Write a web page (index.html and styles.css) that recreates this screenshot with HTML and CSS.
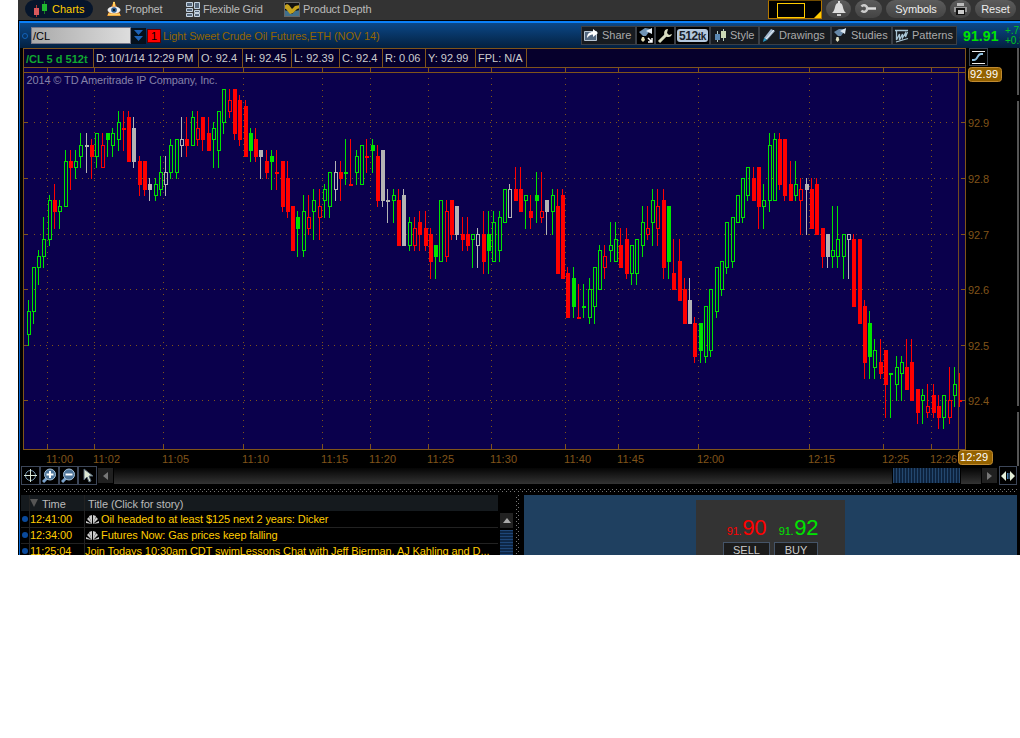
FILE: index.html
```
<!DOCTYPE html>
<html lang="en">
<head>
    <meta charset="UTF-8">
    <title>Charts</title>
    <link rel="stylesheet" href="styles.css">
</head>
<body>
    <div class="app">
        <nav class="nav">
            <div class="tab active">
                <svg width="16" height="16"><path d="M3.500 4v12M11.500 0v13" stroke="#a33" /><path d="M11.500 0v13" stroke="#157a25" /><rect x="1" y="7" width="5" height="7" fill="#d8585c"/><rect x="9" y="3" width="5" height="7" fill="#20b830"/></svg>
                <span>Charts</span>
            </div>
            <div class="tab prophet">
                <svg width="16" height="16"><path d="M8 0l7 15H1z" fill="#d97a20"/><path d="M8 1v4M2 13.500h12" stroke="#ffd060" stroke-width="2"/><ellipse cx="8" cy="9" rx="6.500" ry="3.500" fill="#eee"/><circle cx="8" cy="9" r="2.800" fill="#29598c"/><circle cx="8" cy="9" r="1" fill="#000"/></svg>
                <span>Prophet</span>
            </div>
            <div class="tab grid">
                <svg width="14" height="15"><path d="M.5.5h6v4h-6zM8.500.5h5v6h-5zM.5 6.500h6v3h-6zM8.500 8.500h5v2h-5zM.5 11.500h6v3h-6zM8.500 11.500h5v3h-5z" fill="#56687c" stroke="#c4d2e0"/></svg>
                <span>Flexible Grid</span>
            </div>
            <div class="tab depth">
                <svg width="16" height="15"><path d="M0 0h16v15H0z" fill="#111"/><path d="M0 8l4 1 4 3 3-3 5-1v7H0z" fill="#42708c"/><path d="M0 4l3-2 2 1 3 4 3-3 5-1v3l-3 1-4 4-3 1-4-5-4-1z" fill="#c6a21c"/><path d="M.5.5h15v14H.5z" fill="none" stroke="#666"/></svg>
                <span>Product Depth</span>
            </div>
            <div class="nav-right">
                <div class="monitor"><i></i><b></b></div>
                <div class="pill bell"><svg width="18" height="16"><path d="M8 0h2v2c4 1 2 7 6 10H2c4-3 2-9 6-10z" fill="#ddd"/><path d="M7 13h4v2H7z" fill="#ccc"/></svg></div>
                <div class="pill wrench"><svg width="17" height="12"><path d="M1.500 3.500a3.200 3.200 0 1 1 0 4" fill="none" stroke="#ccc" stroke-width="2.500"/><path d="M8 5.500h8" stroke="#ddd" stroke-width="2.500"/></svg></div>
                <div class="pill symbols">Symbols</div>
                <div class="pill printer"><svg width="13" height="12"><path d="M3 0h7v3H3z" fill="#bbb"/><path d="M0 4h13v5H0z" fill="#999"/><path d="M2 5h9v7H2z" fill="#111"/><path d="M4 7h6v4H4z" fill="#ccc"/></svg></div>
                <div class="pill reset">Reset</div>
            </div>
        </nav>

        <main class="frame">
            <div class="symbol-bar">
                <span class="link-dot"></span>
                <div class="symbol">/CL</div>
                <div class="drop"><svg width="15" height="16"><path d="M3 2h9L7.500 7zM3 8h9l-4.500 5z" fill="#1e62b8"/></svg></div>
                <div class="link-number">1</div>
                <span class="description">Light Sweet Crude Oil Futures,ETH (NOV 14)</span>
                <div class="tools">
                    <div class="tool share">
                        <svg width="15" height="13"><path d="M.5 2.500h12v9H.5z" fill="#536880" stroke="#b9c7d4"/><path d="M3 9c0-4 2-6 6-6V0l5 4-5 4V5.500C6 5.500 5 7 3 9z" fill="#fff"/></svg>
                        <span>Share</span>
                    </div>
                    <div class="tool dark w19"><svg width="16" height="16"><path d="M1 4l6-4 6 1-5 7H5z" fill="#6f93b4"/><path d="M8 3l6-3v6z" fill="#e5edf5"/><path d="M4 9h2l1 3-2 2-2-2z" fill="#ddd8b0"/><path d="M10 10l4 4m0-4v4h-4" stroke="#fff" stroke-width="1.500" fill="none"/></svg></div>
                    <div class="tool dark w20"><svg width="16" height="16"><path d="M2 14l7-7" stroke="#d8dcc0" stroke-width="3"/><path d="M11 1a4 4 0 1 0 4 5l-3 1-2-2z" fill="#d8dcc0"/></svg></div>
                    <div class="tool dark tick"><b>512<small>tk</small></b></div>
                    <div class="tool style">
                        <svg width="13" height="14"><path d="M3.500 2v11M9.500 0v12" stroke="#b4c8c0"/><path d="M1 5h5v6H1z" fill="#5b88b2"/><path d="M7 2h5v7H7z" fill="#cbd8b4"/></svg>
                        <span>Style</span>
                    </div>
                    <div class="tool drawings">
                        <svg width="14" height="15"><path d="M2 10L9 1l4 2-8 9z" fill="#a4b9cf"/><path d="M4 11l8-9" stroke="#edf5fc"/><path d="M1 14l1-4 3 2z" fill="#279cc8"/></svg>
                        <span>Drawings</span>
                    </div>
                    <div class="tool studies">
                        <svg width="13" height="15"><path d="M0 4l5-3 7 0-5 7H4z" fill="#6788a8"/><path d="M6 3l6-3-1 6z" fill="#dce8f2"/><path d="M2.500 9h2l.8 3-1.800 2-1.800-2z" fill="#e0dfc2"/></svg>
                        <span>Studies</span>
                    </div>
                    <div class="tool patterns">
                        <svg width="14" height="14"><path d="M0 1.500h13M1.500 2v9l3-6v6l3-6v4l3-5v4l2-5M1 13l12-3.500" fill="none" stroke="#a8c4d4" stroke-width="1.300"/></svg>
                        <span>Patterns</span>
                    </div>
                </div>
                <b class="last">91.91</b>
                <div class="change">+.79<br>+0.87%</div>
            </div>

            <div class="info">
                <div class="cells">
                    <b class="c-name">/CL 5 d 512t</b>
                    <span class="c-date">D: 10/1/14 12:29 PM</span>
                    <span class="c-o">O: 92.4</span>
                    <span class="c-h">H: 92.45</span>
                    <span class="c-l">L: 92.39</span>
                    <span class="c-c">C: 92.4</span>
                    <span class="c-r">R: 0.06</span>
                    <span class="c-y">Y: 92.99</span>
                    <span class="c-f">FPL: N/A</span>
                </div>
                <div class="scale-button"><svg width="16" height="16"><path d="M2 2.500h13M2 14.500h13" stroke="#eee"/><path d="M2 11h2c4 0 3-6 7-6h2" fill="none" stroke="#8fc0e0" stroke-width="1.800"/></svg></div>
                <div class="edge"></div>
            </div>

            <!-- x in the svg starts at the chart's left border, y at the line under the info cells -->
            <svg class="chart" id="chart" width="997" height="399" viewBox="23 67 997 399"></svg>

            <div class="scroll-row">
                <div class="icon-button"><svg width="15" height="15"><circle cx="7.500" cy="7.500" r="5" fill="none" stroke="#7a9cb4"/><path d="M7.500 1v13M1 7.500h13" stroke="#d8e8d8"/></svg></div>
                <div class="icon-button"><svg width="15" height="15"><path d="M1 14l4-4" stroke="#7ba3cc" stroke-width="3"/><circle cx="8" cy="6.500" r="5.500" fill="#4d7499" stroke="#a5c1da"/><path d="M8 3v7M4.500 6.500h7" stroke="#fff" stroke-width="2"/></svg></div>
                <div class="icon-button"><svg width="15" height="15"><path d="M1 14l4-4" stroke="#7ba3cc" stroke-width="3"/><circle cx="8" cy="6.500" r="5.500" fill="#4d7499" stroke="#a5c1da"/><path d="M4.500 6.500h7" stroke="#fff" stroke-width="2"/></svg></div>
                <div class="icon-button"><svg width="15" height="15"><path d="M4 1v11l3-3 2 5 2-1-2-5h4z" fill="#dce8d4" stroke="#567"/></svg></div>
                <div class="arrow"><svg width="5" height="8"><path d="M5 0v8L0 4z" fill="#777"/></svg></div>
                <div class="track"></div>
                <div class="thumb"></div>
                <div class="track-end"></div>
                <div class="arrow right"><svg width="5" height="8"><path d="M0 0v8l5-4z" fill="#777"/></svg></div>
                <div class="icon-button expand"><svg width="14" height="12"><path d="M0 6l5-5v10zM14 6L9 1v10z" fill="#e4eed8"/><path d="M6.500 3v6M8 3v6" stroke="#4c83b0"/></svg></div>
            </div>

            <svg class="grip" width="993" height="10">
                <defs>
                    <pattern id="dots" width="4" height="4" patternUnits="userSpaceOnUse"><path d="M0 0h1v1H0zM2 2h1v1H2z" fill="#777"/></pattern>
                </defs>
                <rect x="0" y="4" width="993" height="3" fill="url(#dots)"/>
            </svg>

            <div class="bottom">
                <div class="news">
                    <div class="news-row head"><span></span><span class="time"><svg width="8" height="8"><path d="M0 0h8L4 8z" fill="#555"/></svg>Time</span><span class="title">Title (Click for story)</span></div>
                    <div class="news-row">
                        <span class="mark"></span><span>12:41:00</span>
                        <span class="title"><svg class="peacock" width="13" height="9"><path d="M6 9L0 8V6zM6 9L1 4l2-2zM6 9L3 1l3-1zM7 9V0l3 1zM7 9l3-7 2 2zM7 9l6-3v2z" fill="#ccc"/></svg>Oil headed to at least $125 next 2 years: Dicker</span>
                    </div>
                    <div class="news-row">
                        <span class="mark"></span><span>12:34:00</span>
                        <span class="title"><svg class="peacock" width="13" height="9"><path d="M6 9L0 8V6zM6 9L1 4l2-2zM6 9L3 1l3-1zM7 9V0l3 1zM7 9l3-7 2 2zM7 9l6-3v2z" fill="#ccc"/></svg>Futures Now: Gas prices keep falling</span>
                    </div>
                    <div class="news-row">
                        <span class="mark"></span><span>11:25:04</span>
                        <span class="title join">Join Todays 10:30am CDT swimLessons Chat with Jeff Bierman, AJ Kahling and D...</span>
                    </div>
                </div>
                <div class="news-scroll">
                    <div class="up"><svg width="8" height="5"><path d="M0 5h8L4 0z" fill="#aaa"/></svg></div>
                    <div class="v-thumb"></div>
                </div>
                <svg class="v-grip" width="9" height="60"><rect x="2" width="3" height="60" fill="url(#dots)"/></svg>
                <div class="quote-panel">
                    <div class="quote">
                        <div class="side sell"><div class="price"><small>91.</small>90</div><div class="order">SELL</div></div>
                        <div class="side buy"><div class="price"><small>91.</small>92</div><div class="order">BUY</div></div>
                    </div>
                </div>
            </div>
        </main>
    </div>

    <script src="chart.js"></script>
</body>
</html>
```

FILE: styles.css
```
body {
    margin: 0;
    background: #fff;
    font-family: "Liberation Sans", Arial, sans-serif;
    font-size: 11px;
}

svg {
    display: block;
    flex: none;
}

.app {
    width: 1002px;
    height: 555px;
    margin-left: 18px;
    overflow: hidden;
    background: #000;
    color: #ccc;
}

.nav {
    display: flex;
    height: 20px;
    background: #333;
    border-bottom: 1px solid #000;
}

.tab {
    display: flex;
    align-items: center;
    gap: 3px;
    height: 18px;
    color: #bbb;
    letter-spacing: -0.15px;
}

.tab.active {
    box-sizing: border-box;
    width: 68px;
    margin-left: 7px;
    padding-left: 8px;
    border-radius: 9px;
    background: #06152b;
    color: #ffcc00;
    letter-spacing: 0;
}

.prophet {
    width: 67px;
    margin-left: 13px;
}

.grid {
    width: 98px;
    margin-left: 13px;
}

.nav-right {
    display: flex;
    height: 18px;
    margin-left: auto;
    padding-right: 4px;
}

.monitor {
    position: relative;
    box-sizing: border-box;
    width: 54px;
    height: 19px;
    margin-right: 4px;
    border: 1px solid #b47800;
    border-top-color: #704b00;
    background: #000;
}

.monitor i {
    display: block;
    width: 26px;
    height: 13px;
    margin: 2px 0 0 8px;
    border: 1px solid #ffcc00;
}

.monitor b {
    position: absolute;
    right: 0;
    bottom: 0;
    border-left: 7px solid transparent;
    border-bottom: 7px solid #ffcc00;
}

.pill {
    display: flex;
    align-items: center;
    justify-content: center;
    box-sizing: border-box;
    height: 18px;
    border-radius: 9px;
    background: linear-gradient(#5c5c5c, #444);
    color: #eee;
}

.bell {
    width: 25px;
    margin-right: 4px;
}

.wrench {
    width: 27px;
    margin-right: 4px;
}

.symbols {
    width: 60px;
    margin-right: 4px;
    letter-spacing: -0.1px;
}

.printer {
    width: 21px;
    margin-right: 4px;
}

.reset {
    width: 41px;
}

.frame {
    box-sizing: border-box;
    height: 534px;
    margin-left: 1px;
    border-top: 2px solid #0a80f8;
    border-left: 1px solid #0a6cd8;
}

.symbol-bar {
    display: flex;
    align-items: center;
    height: 25px;
    background: linear-gradient(#0b4888, #04203f);
}

.link-dot {
    box-sizing: border-box;
    width: 6px;
    height: 6px;
    margin: 0 3px 0 2px;
    border: 1px solid #1262b8;
    border-radius: 50%;
}

.symbol {
    box-sizing: border-box;
    width: 100px;
    height: 17px;
    padding-left: 1px;
    border: 1px solid #778;
    background: linear-gradient(90deg, #aaa, #ddd);
    color: #000;
    line-height: 16px;
}

.drop {
    width: 15px;
    height: 16px;
    background: #05101c;
}

.link-number {
    box-sizing: border-box;
    width: 14px;
    height: 14px;
    margin: 0 2px 0 1px;
    border: 1px solid #600;
    background: #f00;
    color: #000;
    line-height: 13px;
    text-align: center;
}

.description {
    color: #946500;
    letter-spacing: -0.13px;
}

.tools {
    display: flex;
    margin-left: auto;
}

.tool {
    display: flex;
    align-items: center;
    gap: 4px;
    box-sizing: border-box;
    height: 19px;
    padding-left: 3px;
    border: 1px solid #3a3f46;
    background: #171b20;
    color: #aaa;
}

.tool span {
    position: relative;
    top: -1px;
}

.tool.dark {
    padding-left: 1px;
    background: #000;
}

.share {
    width: 55px;
    gap: 3px;
    padding-left: 2px;
}

.w19 {
    width: 19px;
}

.w20 {
    width: 20px;
}

.tick {
    width: 35px;
}

.tick b {
    width: 31px;
    height: 13px;
    border-radius: 3px;
    background: #b4c8dc;
    color: #182028;
    font-size: 12px;
    line-height: 14px;
    letter-spacing: -0.4px;
    text-align: center;
}

.tick small {
    font-size: 10px;
}

.style {
    width: 49px;
    gap: 3px;
}

.drawings {
    width: 72px;
    gap: 3px;
    padding-left: 2px;
}

.studies {
    width: 61px;
    padding-left: 2px;
}

.patterns {
    width: 65px;
    gap: 3px;
    padding-left: 2px;
}

.last {
    width: 42px;
    margin-left: 6px;
    color: #00e400;
    font-size: 14px;
    letter-spacing: 0.1px;
}

.change {
    width: 15px;
    overflow: hidden;
    color: #00c820;
    font-size: 10px;
    line-height: 10px;
    white-space: nowrap;
}

.info {
    display: flex;
    height: 19px;
    margin-left: 3px;
}

.cells {
    display: flex;
    box-sizing: border-box;
    width: 943px;
    border: 1px solid #80541a;
    border-bottom: none;
    background: #06002c;
    color: #ccc;
    line-height: 18px;
}

.cells > * {
    box-sizing: border-box;
    padding-left: 2px;
    border-right: 1px solid #80541a;
    white-space: nowrap;
}

.c-name {
    width: 70px;
    color: #10a830;
    line-height: 20px;
}

.c-date {
    width: 105px;
    letter-spacing: -0.2px;
}

.c-o { width: 44px; }
.c-h { width: 49px; }
.c-l { width: 48px; }
.c-c, .c-r { width: 43px; }
.c-y { width: 50px; }
.c-f { width: 51px; }

.scale-button {
    box-sizing: border-box;
    width: 19px;
    height: 18px;
    margin-left: 3px;
    border: 1px solid #3c4450;
}

.edge {
    width: 2px;
    margin: 0 1px 0 auto;
    background: #555;
}

.chart {
    margin-left: 3px;
    shape-rendering: crispEdges;
}

.smooth {
    shape-rendering: auto;
}

.scroll-row {
    display: flex;
    align-items: center;
    height: 19px;
    margin-left: 1px;
}

.icon-button {
    display: flex;
    align-items: center;
    justify-content: center;
    box-sizing: border-box;
    width: 19px;
    height: 19px;
    border: 1px solid #3c4658;
}

.arrow {
    display: flex;
    align-items: center;
    justify-content: center;
    width: 15px;
    height: 15px;
    margin: 0 1px;
    background: #202020;
}

.track, .track-end {
    width: 778px;
    height: 16px;
    background: linear-gradient(#050505, #333);
}

.track-end {
    width: 20px;
}

.thumb {
    width: 67px;
    height: 15px;
    margin: 0 1px;
    background: repeating-linear-gradient(90deg, #24486f 0 1px, #0e2440 1px 3px);
}

.expand {
    width: 18px;
    margin-left: 1px;
}

.grip {
    margin-left: 4px;
}

.bottom {
    display: flex;
    height: 60px;
    margin-left: 1px;
}

.news {
    width: 477px;
}

.news-row {
    display: grid;
    grid-template-columns: 8px 55px 414px;
    height: 15px;
    border-bottom: 1px solid #222;
    color: #ffcc00;
    line-height: 15px;
    letter-spacing: -0.09px;
    white-space: nowrap;
}

.news-row.head {
    height: 16px;
    border-color: #000;
    background: #151a1e;
    color: #bbb;
    line-height: 18px;
}

.news-row > span + span {
    border-left: 1px solid #222;
}

.time {
    display: flex;
    gap: 4px;
}

.time svg {
    margin-top: 4px;
}

.title {
    display: flex;
    gap: 2px;
}

.head .title {
    padding-left: 3px;
}

.peacock {
    margin: 3px 0 0 1px;
}

.mark {
    width: 6px;
    height: 6px;
    margin: 4px 0 0 1px;
    border-radius: 50%;
    background: #0a4a9c;
}

.news-scroll {
    width: 13px;
    margin-left: 2px;
    padding-top: 18px;
}

.up {
    display: flex;
    align-items: center;
    justify-content: center;
    height: 15px;
    background: #222;
}

.v-thumb {
    height: 30px;
    margin-top: 2px;
    background: repeating-linear-gradient(#1e4678 0 1px, #0e2747 1px 3px);
}

.v-grip {
    margin: 0 1px;
}

.quote-panel {
    width: 493px;
    background: #1f4060;
}

.quote {
    display: flex;
    gap: 4px;
    box-sizing: border-box;
    width: 149px;
    height: 55px;
    margin: 5px 0 0 172px;
    padding: 14px 0 0 27px;
    background: #333;
}

.side {
    width: 47px;
}

.side.buy {
    width: 44px;
}

.price {
    display: flex;
    align-items: baseline;
    justify-content: center;
    gap: 1px;
    height: 28px;
    font-size: 22px;
    line-height: 27px;
    letter-spacing: -0.3px;
    white-space: nowrap;
}

.price small {
    font-size: 11px;
}

.sell .price {
    color: #f00;
}

.buy .price {
    color: #00e400;
    margin-left: 5px;
}

.order {
    box-sizing: border-box;
    height: 17px;
    border: 1px solid #455468;
    background: #1c1c1c;
    line-height: 14px;
    text-align: center;
}
```

FILE: chart.js
```
// one entry per bar: colour (g/r/w), h = hollow or f = filled,
// then high, body top, body bottom, low, in cents above 92.00
const bars = `
gh58,56,52,50 gh64,64,56,54 gh67,66,64,61 gh73,69,66,64 gh77,76,69,68 rf79,76,74,71
gh76,75,74,71 gh85,83,75,75 rf85,83,82,78 gh85,83,82,80 gh88,86,84,82 wf88,86,86,81
rf87,86,84,80 gh88,88,84,82 rh88,86,82,82 gf88,88,87,84 gh89,88,86,84 gh92,90,87,85
rf92,89,89,85 rf92,91,83,83 wf91,89,83,82 rf84,83,79,77 rf83,83,78,77 wf80,79,78,76
gh80,79,77,76 gh84,81,78,77 wh84,81,79,77 gh87,86,81,80 gh87,87,81,80 wh91,87,86,84
rf91,87,86,84 gh92,91,86,86 rh92,89,87,86 rf91,91,87,85 rf91,88,85,85 gh90,89,87,82
gh92,92,85,82 gh96,96,90,88 rh96,94,92,91 rf96,96,88,87 rf95,94,87,86 rf94,93,84,84
gf89,88,85,83 rf89,87,84,83 wf85,85,84,80 rf85,83,81,80 gf85,84,83,78 rf85,81,81,78
rf83,83,75,74 rf83,80,74,73 rf75,75,67,67 gf74,73,71,66 gh77,74,67,66 rh77,73,71,70
gh78,76,74,69 rh78,75,73,69 gh79,78,76,73 gh81,81,75,73 wh83,81,78,76 rf83,81,80,76
gf87,81,81,79 rf87,79,79,79 gh85,84,81,79 gh86,86,79,79 rf87,84,84,81 gf87,86,85,81
rf86,84,76,75 wf85,85,76,75 wf78,76,76,72 gh78,77,76,72 rf78,76,68,68 wf78,77,68,68
gh73,72,68,67 rh73,71,68,67 rf74,72,70,67 rf74,71,68,67 rf71,70,65,62 gf68,68,66,62
gh76,76,65,65 rh76,74,66,65 rf76,76,70,69 wf75,75,70,69 rf73,70,69,67 rf73,70,68,67
gh70,70,69,64 wh71,70,68,64 rf74,70,65,63 gf74,70,67,63 gh74,72,65,65 gh74,73,67,65
gh78,78,72,72 wh79,78,73,73 rf82,78,76,76 rf82,78,74,74 gh77,77,76,71 rf77,74,73,71
gf81,77,76,72 rh81,74,73,72 wf76,76,74,70 gh78,77,74,70 rf78,75,63,63 rf78,77,62,62
rf64,63,55,55 gf64,62,57,55 rf61,55,55,55 gf61,57,57,55 gh62,60,55,54 gh64,64,57,54
gh68,67,60,60 rh68,66,64,62 gh72,68,67,65 gh72,69,65,65 rf71,68,64,64 rf71,69,63,62
gh68,68,63,61 gh69,69,63,61 gh75,72,68,66 rh75,71,70,69 gh78,76,72,68 rh78,75,71,68
rf78,76,64,62 gf75,75,65,62 rf69,63,60,60 rf69,65,58,58 rf62,60,54,54 wf62,58,54,54
rf55,54,48,47 gf54,54,49,47 gh57,57,48,47 gh60,60,49,48 gh64,64,56,55 gh65,65,60,59
gh72,72,64,63 gh73,73,65,64 gh77,77,72,72 gh80,80,73,72 gh82,82,77,76 rf82,80,76,76
rf82,82,75,71 gh79,76,75,71 gh88,86,76,74 gh88,87,76,76 rf88,87,79,78 rf87,87,77,76
rf83,79,76,76 gh83,79,77,76 rh80,78,76,70 wf80,79,78,70 rf80,78,71,71 rf80,79,70,70
rf71,71,66,64 wf70,70,66,64 gh75,67,66,64 gh75,69,66,64 gh70,70,66,62 wh70,70,69,62
rf70,69,57,57 rf69,69,54,54 rf58,57,47,44 gf56,54,48,44 gh51,49,46,44 rf51,47,45,44
rf49,49,43,37 gf45,45,45,37 gh48,46,43,40 gh48,47,45,40 rf51,46,42,42 rf51,47,40,40
rf42,42,38,36 gh42,41,40,36 rh43,39,38,37 rf43,41,38,37 rf41,39,37,35 gh41,41,37,35
rh46,40,37,36 gh46,43,41,39 rf45,40,40,39`.trim().split(/\s+/);

const times = [
    [47, "11:00"], [94, "11:02"], [163, "11:05"], [243, "11:10"], [322, "11:15"],
    [370, "11:20"], [428, "11:25"], [491, "11:30"], [565, "11:40"], [618, "11:45"],
    [698, "12:00"], [809, "12:15"], [883, "12:25"], [931, "12:26"]
];

const colors = { g: "#00e400", r: "#ff0000", w: "#b4b4b4" };
const line = "#80541a";
const out = [];

function rect(x, y, w, h, fill) {
    out.push(`<rect x="${x}" y="${y}" width="${w}" height="${h}" fill="${fill}"/>`);
}

function text(x, y, width, fill, value) {
    out.push(`<text x="${x}" y="${y}" textLength="${width}" fill="${fill}" font-size="11">${value}</text>`);
}

function priceY(cents) {
    return Math.floor(400.95 - 5.562 * (cents - 40));
}

// background and frame
rect(23, 67, 943, 383, "#0a004c");
rect(23, 67, 943, 1, line);
rect(23, 72, 943, 1, line);
rect(23, 67, 1, 383, line);
rect(965, 67, 1, 383, line);
rect(23, 449, 943, 1, line);

// dotted grid with ticks and labels
for (const [x, label] of times) {
    for (let y = 78; y < 445; y += 6) rect(x, y, 1, 1, line);
    rect(x, 67, 1, 5, line);
    rect(x, 445, 1, 4, line);
    text(x - 1, 463, 27, line, label);
}
for (let cents = 40; cents <= 90; cents += 10) {
    const y = priceY(cents);
    for (let x = 34; x < 958; x += 6) rect(x, y, 1, 1, line);
    rect(23, y, 5, 1, line);
    rect(961, y, 4, 1, line);
    text(968, y + 5, 21, line, "92." + cents / 10);
}

text(26.5, 84, 191, "#8580a8", "2014 © TD Ameritrade IP Company, Inc.");

// candles
bars.forEach((bar, i) => {
    const color = colors[bar[0]];
    const [high, top, bottom, low] = bar.slice(2).split(",").map(v => priceY(Number(v)));
    const x = Math.floor(28.05 + 5.293 * i);
    const height = Math.max(bottom - top + 1, 2);
    rect(x, high, 1, top - high, color);
    rect(x, top + height, 1, Math.max(low - top - height + 1, 0), color);
    if (bar[1] === "h") {
        out.push(`<rect x="${x - 0.5}" y="${top + 0.5}" width="3" height="${height - 1}" fill="none" stroke="${color}"/>`);
    } else {
        rect(x - 1, top, 4, height, color);
    }
});

// cursor line and the two value badges
rect(958, 67, 1, 383, "#704a20");
out.push(`<rect class="smooth" x="968.5" y="67.5" width="33" height="14" rx="3" fill="#946200" stroke="#c08a30"/>`);
text(970, 78, 28, "#fff", "92.99");
out.push(`<rect class="smooth" x="958.5" y="450.5" width="34" height="14" rx="3" fill="#946200" stroke="#c08a30"/>`);
text(960, 461, 28, "#fff", "12:29");

// window edge on the right
rect(1017, 67, 2, 28, "#555");
rect(1017, 101, 2, 305, "#555");
rect(1017, 412, 2, 54, "#555");

document.getElementById("chart").innerHTML = out.join("");
```
